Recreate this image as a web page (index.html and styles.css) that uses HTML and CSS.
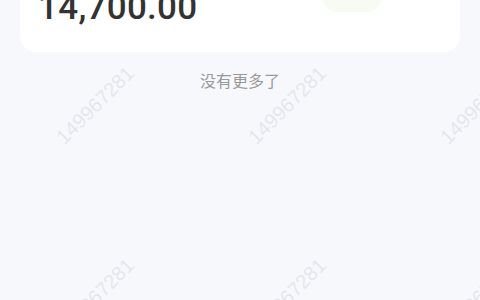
FILE: index.html
```html
<!DOCTYPE html>
<html lang="zh-CN">
<head>
    <meta charset="UTF-8">
    <meta name="viewport" content="width=device-width, initial-scale=1.0">
    <title>账单</title>
    <link rel="stylesheet" href="styles.css">
</head>
<body>

<div class="page">
    <!-- Last record card (scrolled, top cut off) -->
    <div class="record-card">
        <div class="record-row">
            <span class="amount">14,700.00</span>
            <span class="tag"></span>
        </div>
    </div>

    <div class="no-more">没有更多了</div>
</div>

<!-- Watermark layer -->
<div class="watermark">
    <div class="watermark-grid">
        <span>149967281</span><span>149967281</span><span>149967281</span>
        <span>149967281</span><span>149967281</span><span>149967281</span>
    </div>
</div>

</body>
</html>
```

FILE: styles.css
```css
html, body {
    margin: 0;
    padding: 0;
    height: 100%;
    overflow: hidden;
}
body {
    background-color: #F7F8FC;
    font-family: "Noto Sans CJK SC", "Noto Sans", sans-serif;
    position: relative;
}
.page {
    padding: 0 20px;
}
.record-card {
    margin-top: -20px;
    height: 72px;
    background-color: #FFF;
    border-radius: 16px;
    box-sizing: border-box;
    padding: 0 18px;
}
.record-row {
    display: flex;
    justify-content: space-between;
    align-items: flex-start;
}
.amount {
    font-family: Roboto, "DejaVu Sans", sans-serif;
    font-size: 35px;
    font-weight: 500;
    line-height: 56px;
    color: #333;
    letter-spacing: 0.3px;
}
.tag {
    width: 60px;
    height: 32px;
    margin-right: 60px;
    border-radius: 16px;
    background-color: #F7FBF3;
}
.no-more {
    text-align: center;
    font-size: 16px;
    color: #999;
    margin-top: 18px;
    line-height: 20px;
}
.watermark {
    position: absolute;
    top: 0;
    left: 0;
    right: 0;
    bottom: 0;
    overflow: hidden;
    pointer-events: none;
}
.watermark-grid {
    display: grid;
    grid-template-columns: repeat(3, 192px);
    grid-auto-rows: 192px;
    margin: 9px 0 0 -1px;
}
.watermark span {
    display: flex;
    align-items: center;
    justify-content: center;
    font-family: "Liberation Sans", Arial, sans-serif;
    font-size: 20px;
    color: rgba(200, 202, 210, 0.4);
    transform: rotate(-45deg);
}
```
